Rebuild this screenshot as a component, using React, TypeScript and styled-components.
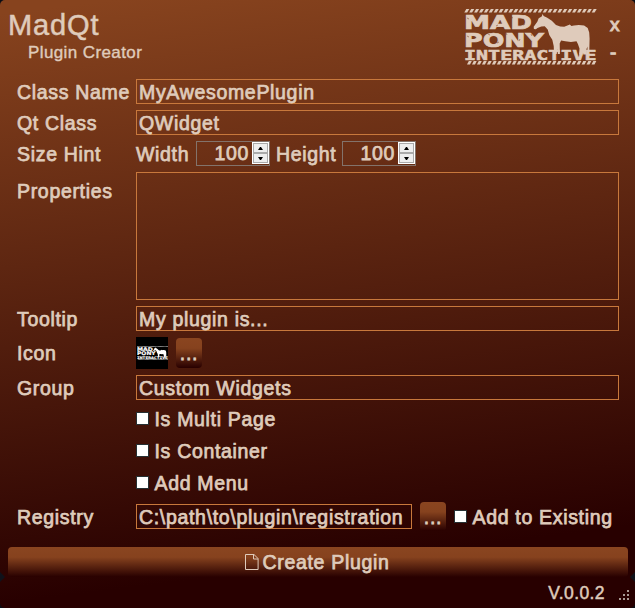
import React from "react";
import styled, { createGlobalStyle } from "styled-components";

const ink = "#dfcbbb";
const line = "#c8783c";

const GlobalStyle = createGlobalStyle`
  body { margin: 0; background: #0b0d14; }
  * { box-sizing: border-box; }
`;

const Window = styled.main`
  position: relative;
  display: flex;
  flex-direction: column;
  width: 635px;
  height: 608px;
  overflow: hidden;
  border-radius: 5px;
  background: linear-gradient(173deg, #87431e 2%, #280000 88%);
  color: ${ink};
  font: 19.5px/24px "Liberation Sans", Arial, sans-serif;
  letter-spacing: 0.68px;
  -webkit-text-stroke: 0.75px ${ink};
  white-space: nowrap;
`;

const Header = styled.header`
  display: flex;
  height: 79px;
  padding: 8px 13px 0 8px;
`;

const Titles = styled.div`
  flex: 1;
`;

const Title = styled.h1`
  margin: 0;
  font-size: 29px;
  line-height: 34px;
  font-weight: 400;
  letter-spacing: 0.9px;
  -webkit-text-stroke-width: 0.5px;
`;

const Subtitle = styled.div`
  padding-left: 20px;
  font-size: 17px;
  line-height: 21px;
  letter-spacing: 0.4px;
  -webkit-text-stroke-width: 0.4px;
`;

const WindowButtons = styled.div`
  display: flex;
  flex-direction: column;
  width: 12px;
  margin-left: 13px;
  padding-top: 5px;
  gap: 4px;
`;

const WindowButton = styled.button`
  all: unset;
  height: 24px;
  font-size: 19px;
  line-height: 24px;
  -webkit-text-stroke: 1px ${ink};
`;

const Form = styled.section`
  display: flex;
  flex-direction: column;
  gap: 6px;
  height: 452px;
  padding: 0 16px 0 17px;
`;

const Row = styled.div<{ $h?: number }>`
  display: grid;
  grid-template-columns: 119px 1fr;
  height: ${(p) => p.$h ?? 25}px;
  align-items: center;
`;

const Label = styled.label<{ $top?: boolean }>`
  align-self: ${(p) => (p.$top ? "start" : "center")};
  padding-top: ${(p) => (p.$top ? 7 : 0)}px;
`;

const Controls = styled.div`
  display: flex;
  align-items: center;
  height: 100%;
`;

const Field = styled.div<{ $w?: number; $fill?: boolean }>`
  width: ${(p) => (p.$w ? `${p.$w}px` : "100%")};
  height: ${(p) => (p.$fill ? "100%" : "25px")};
  padding-left: 2px;
  border: 1px solid ${line};
  line-height: 25px;
`;

const SpinLabel = styled.span<{ $w: number }>`
  width: ${(p) => p.$w}px;
`;

const SpinField = styled.div`
  display: flex;
  width: 74px;
  height: 25px;
  margin-right: 6px;
  border: 1px solid #83736b;
`;

const SpinValue = styled.span`
  flex: 1;
  padding-right: 3px;
  line-height: 23px;
  text-align: right;
`;

const SpinButtons = styled.span`
  display: flex;
  flex-direction: column;
  width: 17px;
  height: 22px;
  padding: 1px;
  background: #fff;
`;

const SpinButton = styled.button`
  display: flex;
  flex: 1;
  align-items: center;
  justify-content: center;
  padding: 0;
  border: 1px solid #aaa;
  background: #eee;
`;

const PluginIcon = styled.div`
  display: flex;
  align-items: center;
  width: 32px;
  height: 32px;
  margin-right: 8px;
  padding-left: 1px;
  background: #000;
  color: #fff;
`;

const glossy = `
  border: 0;
  border-radius: 4px;
  background: linear-gradient(#8a4520 0%, #86421e 34%, #280000 100%);
  color: inherit;
  font: inherit;
  letter-spacing: inherit;
`;

const BrowseButton = styled.button<{ $h: number }>`
  ${glossy}
  width: 26px;
  height: ${(p) => p.$h}px;
  padding: 2px 0 2px 0;
  -webkit-text-stroke: inherit;
  line-height: 22px;
`;

const CreateButton = styled.button`
  ${glossy}
  display: flex;
  align-items: center;
  justify-content: center;
  flex-shrink: 0;
  gap: 4px;
  height: 30px;
  margin: 16px 7px 0 8px;
  padding: 0 2px 0 0;
  -webkit-text-stroke: inherit;
`;

const CheckLabel = styled.label`
  display: flex;
  align-items: center;
  gap: 5.5px;
`;

const CheckBox = styled.span`
  width: 13px;
  height: 13px;
  margin-top: -1px;
  border: 1px solid #263033;
  background: #fff;
`;

const Gap = styled.span<{ $w: number }>`
  width: ${(p) => p.$w}px;
`;

const Footer = styled.footer`
  display: flex;
  flex: 1;
  align-items: center;
  justify-content: flex-end;
  gap: 14px;
  padding: 1px 6px 0 0;
  font-size: 17.5px;
  letter-spacing: 0.4px;
  -webkit-text-stroke-width: 0.5px;
`;

const Grip = styled.svg`
  margin-top: 3px;
`;

const EdgeNotch = styled.svg<{ $side: "left" | "right" }>`
  position: absolute;
  ${(p) => p.$side}: 0;
  bottom: 26px;
`;

const LogoArt = styled.svg`
  fill: currentColor;
  letter-spacing: 0;
  -webkit-text-stroke: 0;
`;

const LogoSlot = styled.div`
  width: 133px;
  padding-top: 1px;
  margin-left: -1px;
`;

const hatch = (count: number) => Array.from({ length: count }, (_, i) => i);

const Logo = ({ width, height }: { width: number; height: number }) => (
  <LogoArt width={width} height={height} viewBox="0 0 133 56" preserveAspectRatio="none">
    {hatch(27).map((i) => (
      <path key={i} d={`M${i * 4.9 + 0.3} 3.4L${i * 4.9 + 2.3} 0h3L${i * 4.9 + 3.2} 3.4z`} />
    ))}
    {hatch(26).map((i) => (
      <path key={i} d={`M${i * 4.98 + 3} 55.4L${i * 4.98 + 4.8} 52h3L${i * 4.98 + 6} 55.4z`} />
    ))}
    <g fontFamily="DejaVu Sans" fontWeight="700" stroke="currentColor" strokeWidth="0.7">
      <text x="0" y="19.6" fontSize="20" textLength="68" lengthAdjust="spacingAndGlyphs">MAD</text>
      <text x="0" y="37.6" fontSize="20" textLength="80" lengthAdjust="spacingAndGlyphs">PONY</text>
    </g>
    <path d="M78.6 5l1 1.9 3.6 1.9 4.6 3 4.2 4.3 4.2 1.4 4 .2 2.6-.9 3-1.4 1.6 1.5 2.6-.5 4.8-.3 5.3.4 3.6 2.6 1.5 4.4.4 6-.3 13h-1.6l-.4-5-1.2 4 .6 4h-3.4l-.6-4.2-.6 4.2h-3l.4-6-1.6-4.6-1.4-2.6-5.6.6-5.6-.6-4.2-.8-1.4 3 .2 10.6h-2l-.6-5-.6 5h-2.6l-.4-8-1.4-6.4-3-4.8-1.6-5.4-3-3.2-3.4.2-3.8 1.4-1.6 1.4-2-.4-.2-2.2 3.6-5 1.4-3.4 3-1.8z" />
    <text
      x="0"
      y="51"
      fontFamily="DejaVu Sans Mono"
      fontWeight="700"
      fontSize="13.2"
      textLength="132.5"
      lengthAdjust="spacingAndGlyphs"
      stroke="currentColor"
      strokeWidth="0.5"
    >
      INTERACTIVE
    </text>
    <g fill="none" stroke="#7c3b1b" strokeWidth="0.8" opacity="0.65">
      <path d="M3 9l2 1m3 7l2-1m16-7l1 2m5 6l2-1m13-8l2 1m10 7l2-1M3 27l2 1m9 5l2 1m8-9l2 1m7 8l2-1m7-9l1 2m12 6l1-2m11-5l1 2" />
    </g>
  </LogoArt>
);

const Spinner = ({ value }: { value: number }) => (
  <SpinField>
    <SpinValue>{value}</SpinValue>
    <SpinButtons>
      <SpinButton aria-label="Increase">
        <svg width="5" height="3"><path d="M0 3L2 0h1l2 3z" /></svg>
      </SpinButton>
      <SpinButton aria-label="Decrease">
        <svg width="5" height="3"><path d="M0 0h5L3 3H2z" /></svg>
      </SpinButton>
    </SpinButtons>
  </SpinField>
);

const Check = ({ children }: { children: React.ReactNode }) => (
  <CheckLabel><CheckBox />{children}</CheckLabel>
);

export default function App() {
  return (
    <>
      <GlobalStyle />
      <Window>
        <Header>
          <Titles>
            <Title>MadQt</Title>
            <Subtitle>Plugin Creator</Subtitle>
          </Titles>
          <LogoSlot><Logo width={133} height={56} /></LogoSlot>
          <WindowButtons>
            <WindowButton>x</WindowButton>
            <WindowButton>-</WindowButton>
          </WindowButtons>
        </Header>

        <Form>
          <Row><Label>Class Name</Label><Field>MyAwesomePlugin</Field></Row>
          <Row><Label>Qt Class</Label><Field>QWidget</Field></Row>
          <Row>
            <Label>Size Hint</Label>
            <Controls>
              <SpinLabel $w={60}>Width</SpinLabel>
              <Spinner value={100} />
              <SpinLabel $w={66}>Height</SpinLabel>
              <Spinner value={100} />
            </Controls>
          </Row>
          <Row $h={128}><Label $top>Properties</Label><Field $fill /></Row>
          <Row><Label>Tooltip</Label><Field>My plugin is...</Field></Row>
          <Row $h={32}>
            <Label>Icon</Label>
            <Controls>
              <PluginIcon><Logo width={31} height={14} /></PluginIcon>
              <BrowseButton $h={30}>...</BrowseButton>
            </Controls>
          </Row>
          <Row><Label>Group</Label><Field>Custom Widgets</Field></Row>
          {["Is Multi Page", "Is Container", "Add Menu"].map((name) => (
            <Row key={name} $h={26}><span /><Check>{name}</Check></Row>
          ))}
          <Row $h={29}>
            <Label>Registry</Label>
            <Controls>
              <Field $w={276}>C:\path\to\plugin\registration</Field>
              <Gap $w={8} />
              <BrowseButton $h={29}>...</BrowseButton>
              <Gap $w={8} />
              <Check>Add to Existing</Check>
            </Controls>
          </Row>
        </Form>

        <CreateButton>
          <svg width="14" height="16" viewBox="0 0 14 16" fill="none" stroke="currentColor" strokeWidth="1">
            <path d="M.5.5h8.5l4.1 4.1v10.9H.5zM8.5.5v4.5h4.5" />
          </svg>
          Create Plugin
        </CreateButton>
        <Footer>
          V.0.0.2
          <Grip width="10" height="10" fill="#a99a94">
            <path d="M8 0h2v2H8zM4 4h2v2H4zM8 4h2v2H8zM0 8h2v2H0zM4 8h2v2H4zM8 8h2v2H8z" />
          </Grip>
        </Footer>
        <EdgeNotch $side="left" width="5" height="10"><path d="M0 0l5 5-5 5z" fill="#10121a" /></EdgeNotch>
        <EdgeNotch $side="right" width="5" height="10"><path d="M5 0L0 5l5 5z" fill="#10121a" /></EdgeNotch>
      </Window>
    </>
  );
}
